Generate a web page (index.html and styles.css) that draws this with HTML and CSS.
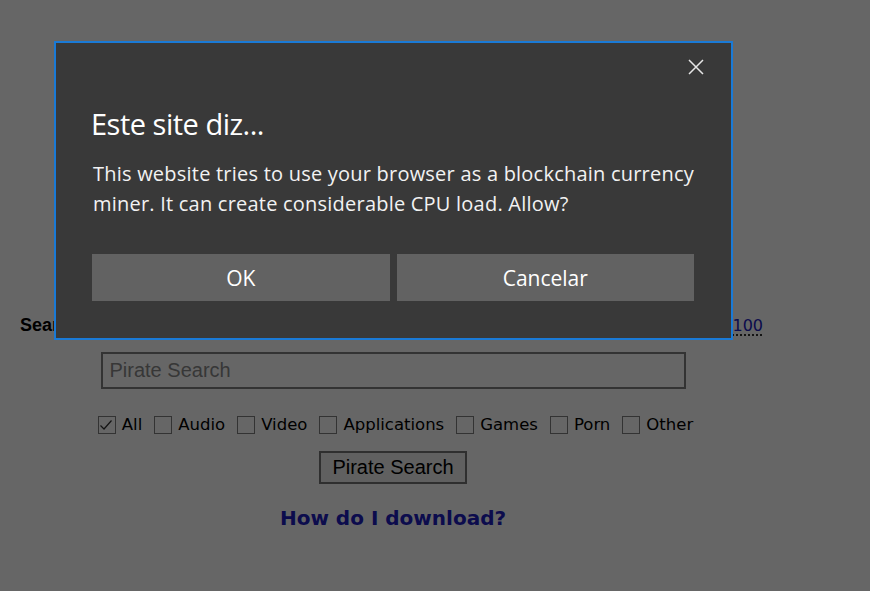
FILE: index.html
```html
<!DOCTYPE html>
<html lang="pt">
<head>
<meta charset="utf-8">
<title>Pirate Search</title>
<link rel="stylesheet" href="styles.css">
</head>
<body>
<div class="page">
  <div class="logo-space"></div>
  <nav class="links">
    <b class="cur">Search Torrents</b>
    <span class="mid">Browse Torrents | Recent Torrents | TV shows | Music |</span>
    <a class="top" href="#">Top 100</a>
  </nav>
  <form class="search">
    <input class="q" type="text" placeholder="Pirate Search">
    <div class="cats">
      <label class="cat"><span class="box checked"><svg viewBox="0 0 18 18" width="18" height="18"><path d="M3.5 9.5 L7 13 L14.5 4.5" fill="none" stroke="#333" stroke-width="1.2"/></svg></span>All</label>
      <label class="cat"><span class="box"></span>Audio</label>
      <label class="cat"><span class="box"></span>Video</label>
      <label class="cat"><span class="box"></span>Applications</label>
      <label class="cat"><span class="box"></span>Games</label>
      <label class="cat"><span class="box"></span>Porn</label>
      <label class="cat"><span class="box"></span>Other</label>
    </div>
    <button class="go" type="button">Pirate Search</button>
  </form>
  <a class="howto" href="#">How do I download?</a>
</div>
<div class="overlay"></div>
<div class="dialog" role="dialog">
  <div class="dlg-head">
    <button class="close" type="button" aria-label="Fechar"><svg viewBox="0 0 16 16" width="16" height="16"><path d="M1 1 L15 15 M15 1 L1 15" stroke="#e6e6e6" stroke-width="1.5" fill="none"/></svg></button>
  </div>
  <h1 class="dlg-title">Este site diz...</h1>
  <p class="dlg-msg">This website tries to use your browser as a blockchain currency miner. It can create considerable CPU load. Allow?</p>
  <div class="dlg-btns">
    <button class="dbtn" type="button">OK</button>
    <button class="dbtn" type="button">Cancelar</button>
  </div>
</div>
</body>
</html>
```
FILE: styles.css
```css
html, body { margin: 0; padding: 0; }
body { background: #fff; width: 870px; height: 591px; overflow: hidden; font-family: "DejaVu Sans", Verdana, sans-serif; color: #000; }
.page { width: 770px; margin-left: 8px; text-align: center; }
.logo-space { height: 314px; }
.links { display: flex; justify-content: space-between; align-items: baseline; padding: 0 15px 0 12px; font-size: 16px; line-height: 22px; }
.links .cur { font-family: "Liberation Sans", Arial, sans-serif; font-size: 18px; }
.links .mid { font-size: 16px; }
.links .top { color: #2020c0; text-decoration: underline dotted #000; text-underline-offset: 4px; }
.search { display: flex; flex-direction: column; align-items: center; margin-top: 15px; }
.q { box-sizing: border-box; width: 585px; height: 37px; border: 2px solid #808080; padding: 0 7px; font-family: "Liberation Sans", Arial, sans-serif; font-size: 20px; background: #fff; }
.q::placeholder { color: #8a8a8a; }
.cats { display: flex; gap: 12px; margin: 26px 0 0 5px; font-size: 16.5px; line-height: 20px; }
.cat { display: flex; align-items: center; gap: 6px; }
.box { box-sizing: border-box; width: 18px; height: 18px; border: 1.5px solid #808080; display: inline-block; }
.box svg { display: block; margin: -1.5px; }
.go { margin-top: 16px; height: 33px; padding: 0 11px; font-family: "Liberation Sans", Arial, sans-serif; font-size: 20px; background: #efefef; border: 2px solid #767676; color: #000; }
.howto { display: inline-block; margin-top: 22px; font-weight: bold; font-size: 20px; color: #2020c0; text-decoration: none; }
.overlay { position: fixed; inset: 0; background: rgba(0,0,0,0.6); }
.dialog { position: fixed; left: 54px; top: 41px; width: 679px; height: 299px; box-sizing: border-box; border: 2px solid #1a7ad6; background: #393939; color: #fff; font-family: "Open Sans", "Noto Sans", sans-serif; padding: 16px 37px 0 36px; }
.dlg-head { display: flex; justify-content: flex-end; margin-right: -10px; height: 16px; }
.close { background: none; border: 0; padding: 0; width: 16px; height: 16px; }
.close svg { display: block; }
.dlg-title { margin: 31px 0 0 -1px; font-weight: normal; font-size: 29px; line-height: 36px; letter-spacing: -0.5px; }
.dlg-msg { margin: 17px -10px 0 1px; font-size: 20px; line-height: 30px; letter-spacing: 0.22px; color: #f2f2f2; }
.dlg-btns { display: flex; gap: 7px; margin-top: 35px; }
.dbtn { flex: 1; height: 47px; background: #626262; border: 0; color: #fff; font-family: "Open Sans", "Noto Sans", sans-serif; font-size: 21px; }
```
